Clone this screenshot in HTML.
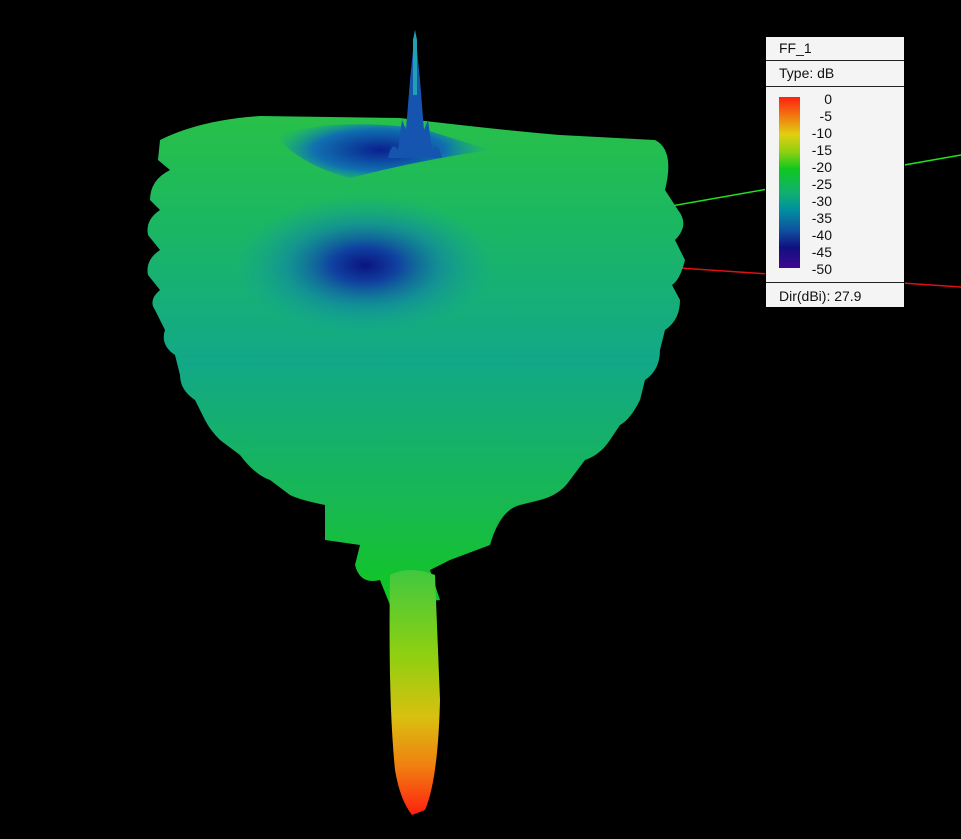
<!DOCTYPE html>
<html><head><style>
html,body{margin:0;padding:0;background:#000;width:961px;height:839px;overflow:hidden;font-family:"Liberation Sans",sans-serif}
#leg{position:absolute;left:765px;top:36px;width:138px;height:270px;background:#f4f4f4;border:1px solid #000;font-size:14px;color:#111}
.row{position:absolute;left:0;width:138px;border-bottom:1px solid #222}
.lbl{position:absolute;right:72px;font-size:14px;text-align:right;width:40px}
</style></head><body>
<svg width="961" height="839" style="position:absolute;left:0;top:0">
<defs>
<linearGradient id="body" x1="0" y1="0" x2="0" y2="1">
<stop offset="0" stop-color="#28c048"/><stop offset="0.2" stop-color="#1cb860"/><stop offset="0.5" stop-color="#12a888"/><stop offset="0.8" stop-color="#18b850"/><stop offset="1" stop-color="#10c820"/>
</linearGradient>
<radialGradient id="spot" cx="365" cy="265" r="1" gradientUnits="userSpaceOnUse" gradientTransform="translate(365 265) scale(130 70) translate(-365 -265)">
<stop offset="0" stop-color="#0a1480"/><stop offset="0.25" stop-color="#1040a0"/><stop offset="0.6" stop-color="#1080a8" stop-opacity="0.6"/><stop offset="1" stop-color="#10a0a0" stop-opacity="0"/>
</radialGradient>
<radialGradient id="top" cx="380" cy="150" r="1" gradientUnits="userSpaceOnUse" gradientTransform="translate(380 150) scale(110 35) translate(-380 -150)">
<stop offset="0" stop-color="#0a2090"/><stop offset="0.6" stop-color="#1070b0"/><stop offset="1" stop-color="#10a0a0" stop-opacity="0"/>
</radialGradient>
<linearGradient id="stalk" x1="0" y1="0" x2="0" y2="1">
<stop offset="0" stop-color="#40c840"/><stop offset="0.35" stop-color="#90d010"/><stop offset="0.6" stop-color="#d8c010"/><stop offset="0.8" stop-color="#f08010"/><stop offset="1" stop-color="#ff2010"/>
</linearGradient>
</defs>
<line x1="660" y1="208" x2="961" y2="155" stroke="#20e020" stroke-width="1.5"/>
<line x1="680" y1="268" x2="961" y2="287" stroke="#e01010" stroke-width="1.5"/>
<g id="shape">
<path id="b" d="M160 140 Q200 120 260 116 L400 118 Q500 130 560 135 L655 140 Q675 150 665 190 L678 210 Q690 225 675 240 L685 260 Q680 280 672 285 L680 300 Q680 320 665 330 L660 350 Q660 370 645 380 L640 400 Q630 420 620 425 L610 440 Q600 455 585 460 L570 480 Q560 495 540 500 L520 505 Q500 510 490 545 L450 560 Q440 565 430 570 L440 600 L390 605 L380 580 Q360 585 355 565 L360 545 L325 540 L325 505 Q300 500 290 495 L270 480 Q255 475 240 455 L220 440 Q210 430 205 420 L195 400 Q180 390 180 375 L175 355 Q160 345 165 330 L155 310 Q148 300 160 290 L148 275 Q145 260 160 250 L148 235 Q145 220 160 210 L150 200 Q150 180 170 170 L158 160 Z" fill="url(#body)"/>
</g>
<ellipse cx="365" cy="265" rx="130" ry="70" fill="url(#spot)"/>
<path d="M275 135 Q330 118 420 128 L490 150 Q420 160 350 178 Q300 165 275 135 Z" fill="url(#top)"/>
<path d="M388 158 Q392 140 398 150 L402 120 L406 130 L410 80 L415 30 L420 80 L424 130 L428 120 L432 150 Q438 140 442 158 Z" fill="#1555b0"/>
<path d="M413 40 L415 30 L417 40 L417 95 L413 95 Z" fill="#20a0b0"/>
<path d="M390 575 Q410 565 435 575 L440 700 Q438 780 425 810 L412 815 Q400 800 395 770 Q388 700 390 575 Z" fill="url(#stalk)"/>
</svg>
<div id="leg">
<div class="row" style="top:0;height:23px"><span style="position:absolute;left:13px;top:3px">FF_1</span></div>
<div class="row" style="top:24px;height:25px"><span style="position:absolute;left:13px;top:4px">Type: dB</span></div>
<div style="position:absolute;left:13px;top:60px;width:21px;height:171px;background:linear-gradient(#ff2010,#f08010 12%,#e0d010 22%,#90d010 32%,#10c820 42%,#10b070 56%,#0090a0 66%,#1050a0 78%,#101080 88%,#400890)"></div>
<div class="lbl" style="top:54px">0</div>
<div class="lbl" style="top:71px">-5</div>
<div class="lbl" style="top:88px">-10</div>
<div class="lbl" style="top:105px">-15</div>
<div class="lbl" style="top:122px">-20</div>
<div class="lbl" style="top:139px">-25</div>
<div class="lbl" style="top:156px">-30</div>
<div class="lbl" style="top:173px">-35</div>
<div class="lbl" style="top:190px">-40</div>
<div class="lbl" style="top:207px">-45</div>
<div class="lbl" style="top:224px">-50</div>
<div style="position:absolute;left:0;top:245px;width:138px;border-top:1px solid #222"></div>
<span style="position:absolute;left:13px;top:251px">Dir(dBi): 27.9</span>
</div>
</body></html>
